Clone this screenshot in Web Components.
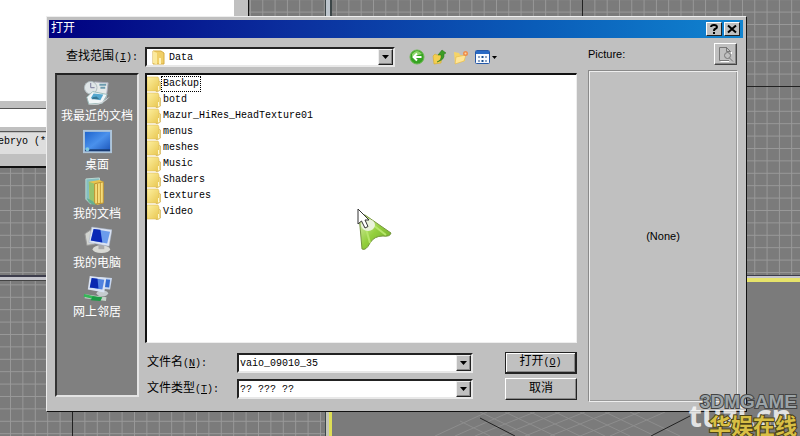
<!DOCTYPE html>
<html lang="zh-CN">
<head>
<meta charset="utf-8">
<title>打开</title>
<style>
html, body { margin: 0; height: 100%; }
body { overflow: hidden; background: #7b7b7b; color: #000;
  font: 12px/16px "Liberation Mono", "Noto Sans CJK SC", monospace; }
</style>
</head>
<body>
<desktop-scene>
  <open-dialog></open-dialog>
</desktop-scene>
<script>
const define = (name, html, setup) => {
  const template = document.createElement('template');
  template.innerHTML = html;
  customElements.define(name, class extends HTMLElement {
    constructor() {
      super();
      this.attachShadow({ mode: 'open' }).append(template.content.cloneNode(true));
    }
    connectedCallback() { if (setup) setup(this, this.shadowRoot); }
  });
};

/* ---------- modelling viewports behind the dialog ---------- */
define('viewport-backdrop', `
<style>
:host { display: block; overflow: hidden; background: #7b7b7b; }
svg { display: block; }
.tab { position: absolute; left: -2px; top: 134px; font: 10px/16px "Liberation Mono", monospace; white-space: pre; }
</style>
<svg width="800" height="436" viewBox="0 0 800 436" aria-hidden="true" shape-rendering="crispEdges">
  <defs>
    <pattern id="g" width="12.4" height="12.4" x="10" y="-.8" patternUnits="userSpaceOnUse"><path d="M.5 0V12.4M0 .5H12.4" stroke="#999" fill="none"/></pattern>
    <pattern id="h" width="12.3" height="12.4" x="4" y="-.8" patternUnits="userSpaceOnUse"><path d="M.5 0V12.3M0 .5H12.4" stroke="#999" fill="none"/></pattern>
  </defs>
  <rect width="800" height="436" fill="#7b7b7b"/>
  <rect y="168" width="325" height="268" fill="url(#g)"/>
  <rect x="249" width="551" height="275" fill="url(#h)"/>
  <rect width="248" height="168" fill="#c0c0c0"/>
  <rect width="234" height="101" fill="#fff"/>
  <path d="M0 108.500H46M0 131.500H46" stroke="#555"/>
  <rect y="109" width="46" height="18" fill="#fff"/>
  <rect y="133" width="46" height="21" fill="#dedede"/>
  <path d="M0 167H46" stroke="#111" stroke-width="2"/>
  <path d="M248.500 0V168" stroke="#111"/>
  <path d="M0 275.500H325M331 275.500H800" stroke="#3d3d4c" stroke-width="2"/>
  <path d="M0 278H325M747 277.500H800" stroke="#c5c5cc" stroke-width="3"/>
  <path d="M0 280.500H325" stroke="#444"/>
  <rect x="325" width="7" height="436" fill="#3c4648"/>
  <rect x="326" width="4" height="275" fill="#bcc4cc"/>
  <rect x="326" y="281" width="3" height="155" fill="#c3c4b8"/>
  <rect x="329" y="281" width="3" height="155" fill="#dede55"/>
  <rect x="747" y="278" width="53" height="4" fill="#e6e36a"/>
  <path d="M582.500 0V16M747 86H800M72.500 412V436" stroke="#222"/>
  <g shape-rendering="auto" fill="none">
    <path d="M435 436L487 412M455 436L510 412M475 436L535 412M500 436L560 412M525 436L585 412M550 436L610 412M580 436L640 412M610 436L665 412M460 421L490 436M480 412L530 436M505 412L555 436M530 412L580 436M555 412L605 436M580 412L630 436M605 412L655 436M630 412L680 436" stroke="#8d8d8d"/>
    <path d="M480 418L515 436M651 436L690 416" stroke="#222"/>
  </g>
</svg>
<span class="tab">ebryo (*.</span>`);

define('desktop-scene', `
<style>
:host { display: flex; position: relative; min-height: 100vh; box-sizing: border-box; padding: 16px 53px 24px 46px; }
viewport-backdrop { position: absolute; inset: 0; }
slot { display: contents; }
::slotted(*) { flex: 1; position: relative; min-width: 0; }
site-watermark { position: absolute; right: 3px; bottom: 0; }
</style>
<viewport-backdrop></viewport-backdrop>
<slot></slot>
<site-watermark></site-watermark>`);

define('site-watermark', `
<style>
:host { display: grid; justify-items: end; }
span { white-space: nowrap; -webkit-text-stroke: 2px #444; paint-order: stroke fill; }
.site { position: absolute; right: 5px; bottom: 3px; font: bold 31px/36px "Open Sans", sans-serif; color: #ffffffcc; -webkit-text-stroke: 0; }
.name { position: relative; font: bold 19px/20px "Liberation Sans", sans-serif; color: #9ba3a7; }
.cn { position: relative; font: bold 22px/24px "Noto Sans CJK SC", sans-serif; color: #d8bf45; -webkit-text-stroke-color: #4c4318; }
</style>
<span class="site">tuzi.cn</span>
<span class="name">3DMGAME</span>
<span class="cn">华娱在线</span>`);

/* ---------- dialog pieces ---------- */
define('title-bar', `
<style>
:host { display: flex; align-items: center; gap: 2px; height: 18px; padding: 0 3px 0 2px; color: #fff;
  background: linear-gradient(90deg, #000080, #0b2f9e 35%, #0a5cb8 70%, #1084d0); }
h1 { flex: 1; margin: 0; font: inherit; line-height: 18px; }
button { width: 16px; height: 14px; padding: 0; display: grid; place-items: center; background: #c0c0c0;
  border: 1px solid; border-color: #fff #222 #222 #fff; }
svg { display: block; }
</style>
<h1><slot></slot></h1>
<button aria-label="帮助"><svg width="10" height="10" viewBox="0 0 10 10" fill="none" stroke="#000" stroke-width="2"><path d="M2 3Q2.200 1 5 1T8 3Q8 4.300 6 5Q5 5.500 5 7M5 8V10"/></svg></button>
<button aria-label="关闭"><svg width="10" height="10" viewBox="0 0 10 10" stroke="#000" stroke-width="2"><path d="M1 1.500L9 8.500M9 1.500L1 8.500"/></svg></button>`);

const fieldStyle = `
<style>
:host { display: flex; align-items: center; }
label { width: var(--label-width, 90px); box-sizing: border-box; padding-right: var(--label-pad, 0); text-align: var(--label-align, left); white-space: nowrap; flex: none; }
.k { font-size: 10px; }
.box { flex: 1; min-width: 0; display: flex; height: var(--field-height, 20px); box-sizing: border-box; background: #fff; border: 2px solid; border-color: #222 #e8e8e8 #e8e8e8 #222; }
.wrap { flex: 1; display: grid; grid-template-columns: 1fr 15px; min-width: 0; }
select, input { grid-area: 1 / 1 / 2 / 3; min-width: 0; width: 100%; height: 100%; box-sizing: border-box; margin: 0; padding: 0 16px 0 1px; border: 0; outline: 0; background: none; appearance: none; border-radius: 0; color: #000; font: 10px/15px "Liberation Mono", monospace; }
.arrow { grid-area: 1 / 2 / 2 / 3; box-sizing: border-box; display: grid; place-items: center; width: 15px; padding: 0; background: #c0c0c0; border: 1px solid; border-color: #eee #222 #222 #eee; box-shadow: inset -1px -1px #888; }
span.arrow { pointer-events: none; }
::slotted(svg) { align-self: center; margin: 0 3px 0 5px; }
</style>`;
const arrow = `<svg width="7" height="4" viewBox="0 0 7 4" aria-hidden="true"><path d="M0 0H7L3.500 4Z"/></svg>`;
const setupField = (host, root) => {
  root.querySelector('.t').textContent = host.getAttribute('text');
  root.querySelector('u').textContent = host.getAttribute('key');
};
define('select-field', `${fieldStyle}
<label for="c"><span class="t"></span><span class="k">(<u></u>):</span></label>
<div class="box"><slot></slot><div class="wrap"><select id="c"><option></option></select><span class="arrow">${arrow}</span></div></div>`,
(host, root) => { setupField(host, root); root.querySelector('option').textContent = host.getAttribute('value'); });
define('input-field', `${fieldStyle}
<label for="c"><span class="t"></span><span class="k">(<u></u>):</span></label>
<div class="box"><div class="wrap"><input id="c" type="text"><button class="arrow" aria-label="历史记录">${arrow}</button></div></div>`,
(host, root) => { setupField(host, root); root.querySelector('input').value = host.getAttribute('value'); });

define('tool-bar', `
<style>
:host { display: flex; align-items: center; gap: 6px; }
button { padding: 0; border: 0; background: none; display: flex; align-items: center; gap: 2px; height: 16px; }
svg { display: block; }
</style>
<button aria-label="后退"><svg width="16" height="16" viewBox="0 0 16 16"><circle cx="8" cy="8" r="7" fill="#36a322" stroke="#6aba4e"/><path d="M3 5Q8-1 13 5Q8 7 3 7Z" fill="#8dd66a"/><path d="M12.500 8H4.500M8 4.500L4.500 8L8 11.500" fill="none" stroke="#fff" stroke-width="2"/></svg></button>
<button aria-label="向上"><svg width="16" height="16" viewBox="0 0 16 16"><path d="M2 7L4 5L6 6L11 5L10 14L3 15Z" fill="#f3cf4f" stroke="#d5a82d" stroke-width=".6"/><path d="M6 13Q11 11 10 6L7 6L11 1L15 4L13 5Q14 11 6 13Z" fill="#3b9c26" stroke="#247316" stroke-width=".5"/></svg></button>
<button aria-label="新建文件夹"><svg width="16" height="16" viewBox="0 0 16 16"><path d="M1 3L6 4L7 6L12 7V12L2 15Z" fill="#f6d467"/><path d="M3 8L13 6L11 12L2 15Z" fill="#ffe595" stroke="#ddb143" stroke-width=".5"/><circle cx="12.500" cy="4.500" r="2.500" fill="#ef8c4b"/><circle cx="12.500" cy="4.500" r="1" fill="#ffd89a"/></svg></button>
<button aria-label="查看"><svg width="15" height="14" viewBox="0 0 15 14"><rect x=".5" y=".5" width="14" height="13" rx="1" fill="#f8fbff" stroke="#2458a8"/><path d="M1 1H14V4H1Z" fill="#286ac5"/><path d="M3 6h2v2H3zM3 10h2v2H3zM10 6h2v2h-2zM10 10h2v2h-2z" fill="#8ea4c4"/><path d="M6.500 6h2v2h-2zM6.500 10h2v2h-2z" fill="#174f91"/></svg><svg width="5" height="3" viewBox="0 0 5 3"><path d="M0 0H5L2.500 3Z"/></svg></button>`);

define('place-item', `
<style>
:host { display: block; }
button { width: 100%; display: grid; justify-items: center; padding: 0; border: 0; background: none; color: #fff; font: 12px/14px "Noto Sans CJK SC", sans-serif; white-space: nowrap; }
::slotted(svg) { display: block; }
</style>
<button><slot></slot><span></span></button>`,
(host, root) => { root.querySelector('span').textContent = host.getAttribute('label'); });

define('places-bar', `
<style>
:host { display: flex; flex-direction: column; gap: 6px; padding-top: 4px; background: #808080; border: 1px solid; border-width: 2px; border-color: #222 #e4e4e4 #e4e4e4 #333; box-sizing: border-box; }
svg { width: 29px; height: 29px; }
</style>
<place-item label="我最近的文档"><svg viewBox="0 0 30 30"><path d="M12 3L26 4L24 20L9 18Z" fill="#e5e9e9" stroke="#aab"/><path d="M17 6h7M18 9h5" stroke="#6d9aaf" stroke-width="2"/><circle cx="8" cy="9" r="6.500" fill="#dfe5e7" stroke="#b0bcc0"/><path d="M8 4V9H12" fill="none" stroke="#779"/><path d="M4 19L10 13L25 16L20 25L6 26Z" fill="#f2f6f8" stroke="#9bb"/><path d="M8 20L11 15L21 16L18 22Z" fill="#54a7ce"/><path d="M10 19L14 18L17 21L9 21Z" fill="#347795"/><path d="M5 26Q18 30 28 18L22 22Q16 27 5 26Z" fill="#ccd3d5"/></svg></place-item>
<place-item label="桌面"><svg viewBox="0 0 30 30"><defs><linearGradient id="a" x2="1" y2="1"><stop stop-color="#1a60ca"/><stop offset=".5" stop-color="#4a91ec"/><stop offset="1" stop-color="#174fb5"/></linearGradient></defs><rect x="1" y="3" width="28" height="22" fill="url(#a)" stroke="#aec5d9" stroke-width="2"/><path d="M2 23H28" stroke="#183c75" stroke-width="2"/><circle cx="4.500" cy="22" r="2" fill="#80c9df"/></svg></place-item>
<place-item label="我的文档"><svg viewBox="0 0 30 30"><path d="M3 2L17 1V23L8 28L3 23Z" fill="#83bfc1" stroke="#bddbd4"/><path d="M6 5L17 3L21 5V27L15 29L7 23Z" fill="#e8c44e"/><path d="M6 5L12 7V27L7 24Z" fill="#97c36c"/><path d="M12 7L21 5V27L12 28Z" fill="#f5dc7a" stroke="#bc9232"/><path d="M15 7V28M18 6V27" stroke="#c59b36"/><path d="M4 22Q11 24 13 29Q6 29 4 22Z" fill="#66af8f"/></svg></place-item>
<place-item label="我的电脑"><svg viewBox="0 0 30 30"><path d="M2 8L8 4L12 19L4 20Z" fill="#d2d4d0" stroke="#999"/><ellipse cx="19" cy="24" rx="9" ry="4" fill="#d9dad5"/><path d="M16 19H22V24H16Z" fill="#aaa"/><path d="M9 1L30 4L27 21L6 17Z" fill="#dce4f3" stroke="#9eabc1" stroke-width=".5"/><path d="M11 3L28 6L25 18L8 15Z" fill="#6b9cec"/><path d="M11 3L18 4L20 17L8 15Z" fill="#0a28b5"/></svg></place-item>
<place-item label="网上邻居"><svg viewBox="0 0 30 30"><path d="M17 2L30 3L28 15L16 14Z" fill="#c9d7ee"/><path d="M19 4L28 5L27 13L18 12Z" fill="#326ad0"/><ellipse cx="20" cy="19" rx="6" ry="3" fill="#c5cbce"/><path d="M7 1L24 3L22 18L5 15Z" fill="#dae3f3"/><path d="M9 3L22 5L20 15L7 13Z" fill="#5182df"/><path d="M9 3L15 4L16 14L7 13Z" fill="#0a28b0"/><path d="M2 22L24 25" stroke="#c5d2c9" stroke-width="4"/><path d="M1 21L18 25" stroke="#35b857" stroke-width="3"/><path d="M10 22L20 23L18 27L8 26Z" fill="#1d9b46"/></svg></place-item>`);

define('folder-item', `
<style>
:host { display: flex; align-items: center; gap: 1px; height: 16px; }
svg { display: block; flex: none; }
a { color: #000; text-decoration: none; font: 10px/14px "Liberation Mono", monospace; padding: 0 1px; }
:host([focused]) a { outline: 1px dotted #000; }
</style>
<svg width="14" height="16" viewBox="0 0 14 16" aria-hidden="true"><defs><linearGradient id="f" x2="1" y2="1"><stop stop-color="#fdf0a0"/><stop offset="1" stop-color="#e8c650"/></linearGradient></defs><path d="M10 4L13.500 6V14L11 15.500H9Z" fill="#f7e490" stroke="#c9a645" stroke-width=".6"/><path d="M0 1H11L12 3V13L10 15H0Z" fill="url(#f)" stroke="#dfbd57" stroke-width=".6"/><path d="M11.500 10V14" stroke="#fff8d0"/></svg>
<a href="#"><slot></slot></a>`);

define('folder-list', `
<style>
:host { display: flex; flex-direction: column; position: relative; background: #fff; border: 1px solid; border-color: #111 #eee #eee #111; border-top-width: 2px; border-left-width: 2px; padding-top: 1px; box-sizing: border-box; overflow: hidden; }
.pointer { position: absolute; left: 210px; top: 133px; }
</style>
<slot></slot>
<svg class="pointer" width="36" height="44" viewBox="0 0 36 44" aria-hidden="true"><defs><linearGradient id="p" x2="1" y2="1"><stop stop-color="#e4f1bc"/><stop offset=".5" stop-color="#93cf3c"/><stop offset="1" stop-color="#6ca52a"/></linearGradient></defs><path d="M2 7L8 7L34 25Q33 29 26 28Q17 28 13 35Q9 43 5 41Z" fill="url(#p)" stroke="#76963f"/><path d="M8 17L13 35M11 13L29 27" stroke="#b6e56b" stroke-width="2"/><ellipse cx="11" cy="17" rx="7" ry="6" fill="#eaf2dc"/><path d="M1 1V16L4.500 13L8 20L11 18.500L8 12H12Z" fill="#fff" stroke="#333"/></svg>`);

define('win-button', `
<style>
:host { display: grid; }
button { height: 22px; padding: 0; background: #c0c0c0; color: #000; border: 1px solid; border-color: #fff #222 #222 #fff; box-shadow: inset -1px -1px #888; font: 12px/16px "Liberation Mono", "Noto Sans CJK SC", monospace; }
:host([default]) button { border-color: #222; border-width: 1px 2px 2px 1px; box-shadow: inset 1px 1px #fff, inset -1px -1px #888; }
</style>
<button><slot></slot></button>`);

define('picture-pane', `
<style>
:host { display: flex; flex-direction: column; gap: 5px; font: 11px/14px "Liberation Sans", sans-serif; }
header { display: flex; align-items: center; justify-content: space-between; padding-right: 1px; }
button { width: 23px; height: 22px; padding: 0; display: grid; place-items: center; background: #c0c0c0; border: 1px solid; border-color: #fff #444 #444 #fff; box-shadow: inset -1px -1px #888; }
.view { flex: 1; display: grid; place-items: center; border: 1px solid #8a8a8a; border-right-color: #eee; border-bottom-color: #eee; box-shadow: inset 1px 1px #eee, inset -1px -1px #999; }
</style>
<header><span>Picture:</span>
<button aria-label="预览"><svg width="17" height="17" viewBox="0 0 17 17" fill="none" stroke="#777"><path d="M10 1.500H2.500V14.500H12M9.500 1.500V5.500H13.500L9.500 1.500"/><circle cx="10.500" cy="9.500" r="3"/><path d="M12.500 12L16 15.500"/><path d="M3.500 15.500H12M14.500 6V8" stroke="#fff"/></svg></button></header>
<div class="view"><span>(None)</span></div>`);

define('open-dialog', `
<style>
:host { display: flex; flex-direction: column; box-sizing: border-box; padding: 3px 3px 2px 2px; background: #c0c0c0; border: 1px solid; border-color: #eee #111 #111 #eee; }
.body { flex: 1; display: flex; gap: 11px; padding: 5px 5px 7px 6px; min-height: 0; }
.main { flex: 1; min-width: 0; display: grid; grid-template-columns: 84px 1fr; grid-template-rows: auto 1fr; gap: 6px; padding-top: 4px; }
.look { grid-column: 1 / 3; display: flex; align-items: center; gap: 14px; }
.look select-field { flex: 0 1 340px; --label-width: 90px; --label-pad: 7px; --label-align: right; --field-height: 20px; }
places-bar { margin-bottom: 5px; }
.right { display: flex; flex-direction: column; gap: 9px; min-width: 0; padding-bottom: 2px; }
folder-list { flex: 1; }
form { display: grid; grid-template-columns: minmax(0, 326px) 72px; justify-content: space-between; align-items: center; gap: 4px; margin: 0; padding-left: 2px; }
picture-pane { flex: none; width: 150px; }
.k { font-size: 10px; }
</style>
<title-bar>打开</title-bar>
<div class="body">
  <div class="main">
    <div class="look">
      <select-field text="查找范围" key="I" value="Data"><svg width="13" height="15" viewBox="0 0 13 15" aria-hidden="true"><path d="M1 1H9L12 3V14H1Z" fill="#f0cf68" stroke="#d6ac42"/><path d="M1 1L5 3V14.500L1 13Z" fill="#fbe99c"/><path d="M8 8V14" stroke="#fff2b8" stroke-width="2"/></svg></select-field>
      <tool-bar></tool-bar>
    </div>
    <places-bar></places-bar>
    <div class="right">
      <folder-list>
        <folder-item focused>Backup</folder-item>
        <folder-item>botd</folder-item>
        <folder-item>Mazur_HiRes_HeadTexture01</folder-item>
        <folder-item>menus</folder-item>
        <folder-item>meshes</folder-item>
        <folder-item>Music</folder-item>
        <folder-item>Shaders</folder-item>
        <folder-item>textures</folder-item>
        <folder-item>Video</folder-item>
      </folder-list>
      <form onsubmit="return false">
        <input-field text="文件名" key="N" value="vaio_09010_35"></input-field>
        <win-button default>打开<span class="k">(<u>O</u>)</span></win-button>
        <select-field text="文件类型" key="T" value="?? ??? ??"></select-field>
        <win-button>取消</win-button>
      </form>
    </div>
  </div>
  <picture-pane></picture-pane>
</div>`);
</script>
</body>
</html>
